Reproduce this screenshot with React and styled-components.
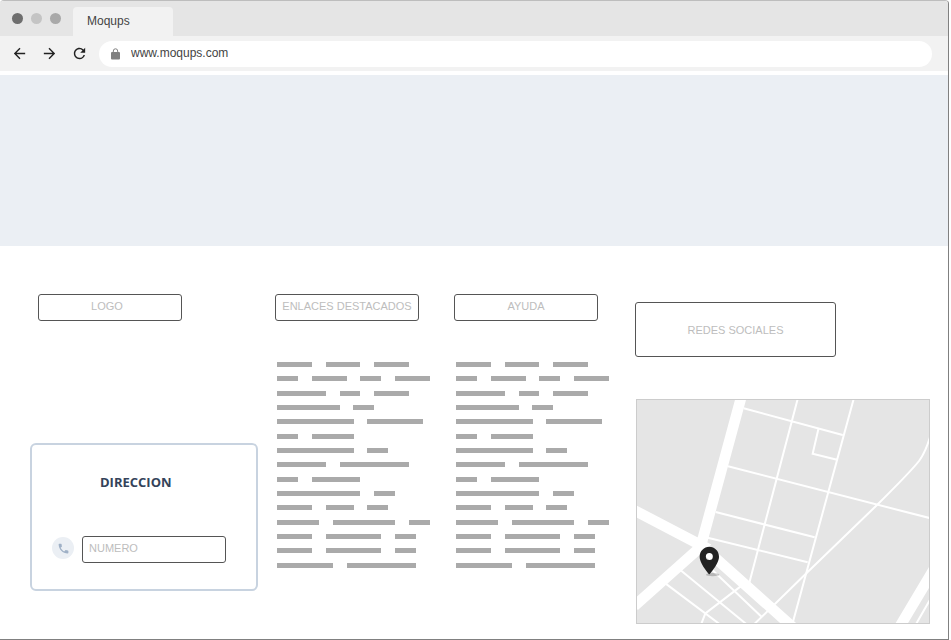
import React from "react";
import styled, { createGlobalStyle } from "styled-components";
import { MdArrowBack, MdArrowForward, MdRefresh, MdPhone } from "react-icons/md";

const GlobalStyle = createGlobalStyle`
  *, *::before, *::after { box-sizing: border-box; }
  body { margin: 0; background: #fff; font-family: "Liberation Sans", Arial, sans-serif; }
`;

const Window = styled.div`
  display: flex;
  flex-direction: column;
  min-height: 100vh;
  margin-right: 2px;
  background: #fff;
  border-top: 1px solid #bdbdbd;
  border-right: 1px solid #808080;
  border-bottom: 1px solid #808080;
  border-radius: 4px 4px 0 0;
  overflow: hidden;
`;

const TitleBar = styled.div`
  display: flex;
  align-items: flex-end;
  gap: 12px;
  height: 35px;
  padding-left: 12px;
  background: #e5e5e5;
`;

const Lights = styled.div`
  display: flex;
  gap: 8px;
  padding-bottom: 12px;
`;

const Light = styled.span`
  width: 11px;
  height: 11px;
  border-radius: 50%;
  background: ${(p) => p.$color};
`;

const Tab = styled.button`
  width: 100px;
  height: 29px;
  padding: 0 14px 2px;
  border: 0;
  border-radius: 4px 4px 0 0;
  background: #f2f2f2;
  color: #444;
  font: 12px/26px "Liberation Sans", Arial, sans-serif;
  text-align: left;
`;

const Toolbar = styled.div`
  display: flex;
  align-items: center;
  height: 35px;
  padding: 0 16px 0 11px;
  background: #f2f2f2;
`;

const NavButtons = styled.div`
  display: flex;
  gap: 13px;
  margin-right: 11px;
`;

const IconButton = styled.button`
  display: flex;
  padding: 0;
  border: 0;
  background: none;
  color: #222;
  font-size: 17px;
`;

const AddressBar = styled.label`
  display: flex;
  flex: 1;
  align-items: center;
  gap: 11px;
  height: 26px;
  padding: 0 12px;
  border-radius: 13px;
  background: #fff;
`;

const AddressInput = styled.input`
  flex: 1;
  padding: 0 0 2px;
  border: 0;
  outline: 0;
  background: none;
  color: #444;
  font: 12px/16px "Liberation Sans", Arial, sans-serif;
`;

const Banner = styled.section`
  height: 171px;
  margin-top: 4px;
  background: #ebeff4;
`;

const Footer = styled.footer`
  display: grid;
  grid-template-columns: 245fr 179fr 181fr 295fr;
  align-items: start;
  padding: 48px 18px 14px 30px;
`;

const Column = styled.section`
  display: flex;
  flex-direction: column;
  align-items: flex-start;
  gap: ${(p) => p.$gap}px;
  padding-top: ${(p) => p.$top || 0}px;
`;

const Field = styled.input`
  width: ${(p) => p.$width || 144}px;
  height: ${(p) => p.$height || 27}px;
  padding: 0 6px ${(p) => (p.$height ? 0 : 4)}px;
  border: 1px solid #555;
  border-radius: 3px;
  background: #fff;
  color: #444;
  font: 11px/16px "Liberation Sans", Arial, sans-serif;
  text-align: ${(p) => p.$align || "center"};

  &::placeholder { color: #bdbdbd; opacity: 1; }
`;

const LogoField = styled(Field)`
  padding-right: 12px;
`;

const LogoSlot = styled.div`
  padding-left: 8px;
`;

const Card = styled.section`
  display: flex;
  flex-direction: column;
  gap: 45px;
  width: 228px;
  height: 148px;
  padding: 28px 20px;
  border: 2px solid #c8d3e0;
  border-radius: 6px;
`;

const CardTitle = styled.h2`
  margin: 0;
  padding-left: 48px;
  color: #34435a;
  font: bold 13px/18px "Open Sans", sans-serif;
`;

const PhoneRow = styled.label`
  display: flex;
  align-items: center;
  gap: 8px;
`;

const PhoneBadge = styled.span`
  display: flex;
  align-items: center;
  justify-content: center;
  width: 22px;
  height: 22px;
  margin-bottom: 3px;
  border-radius: 50%;
  background: #ebeff4;
  color: #9fb0c6;
  font-size: 13px;
`;

const Lines = styled.div`
  display: flex;
  flex-direction: column;
  justify-content: space-between;
  width: 155px;
  height: 206px;
  padding-left: 2px;
`;

const Line = styled.div`
  display: grid;
  grid-template-columns: repeat(22, 1fr);
  height: 5px;
`;

const Word = styled.span`
  grid-column: ${(p) => p.$start} / span ${(p) => p.$size};
  background: #aaa;
`;

const MapFrame = styled.div`
  align-self: stretch;
  margin-left: 1px;
  border: 1px solid #ccc;
  background: #e5e5e5;

  svg { display: block; width: 100%; height: auto; }
`;

const PARAGRAPH = [
  [5, 5, 5],
  [3, 5, 3, 5],
  [7, 3, 5],
  [9, 3],
  [11, 8],
  [3, 6],
  [11, 3],
  [7, 10],
  [3, 7],
  [12, 3],
  [5, 4, 3],
  [6, 9, 3],
  [5, 8, 3],
  [5, 8, 3],
  [8, 10],
];

function TextLine({ words }) {
  let next = 1;
  return (
    <Line>
      {words.map((size, i) => {
        const start = next;
        next += size + 2;
        return <Word key={i} $start={start} $size={size} />;
      })}
    </Line>
  );
}

function LinkColumn({ title }) {
  return (
    <Column $gap={41}>
      <Field placeholder={title} aria-label={title} />
      <Lines aria-hidden="true">
        {PARAGRAPH.map((words, i) => (
          <TextLine key={i} words={words} />
        ))}
      </Lines>
    </Column>
  );
}

function LockIcon() {
  return (
    <svg width="9" height="12" viewBox="0 0 9 12" aria-hidden="true">
      <rect y="4" width="9" height="7.500" rx="1" fill="#808080" />
      <path d="M2.300 4.500V3a2.200 2.200 0 0 1 4.400 0v1.500" fill="none" stroke="#808080" />
    </svg>
  );
}

function StreetMap() {
  return (
    <MapFrame>
      <svg viewBox="0 0 876 669" role="img" aria-label="Mapa">
        <g fill="none" stroke="#fff" strokeWidth="6">
          <path d="M320 25L617 105M482-3L337 548M650-3L468 665M544 88L527 161L600 179M273 199L885 356M236 336L533 412M212 413L512 487" />
          <path d="M882 101Q867 155 846 183Q820 216 720 315L505 523L350 674M130 510L330 674M86 551L250 674M226 510L372 649M311 559L205 640L192 674M836 674L884 591" />
        </g>
        <g fill="none" stroke="#fff" strokeWidth="32">
          <path d="M312-6L191 440M-8 331L195 437L-8 618M187 431L470 684M782 690L890 509" />
        </g>
        <ellipse cx="227" cy="524" rx="20" ry="5" fill="#000" opacity=".2" />
        <path
          fill="#222"
          fillRule="evenodd"
          d="M217 440C201 440 188 453 188 470C188 492 217 523 217 523S246 492 246 470C246 453 233 440 217 440ZM217 459A10.500 10.500 0 1 1 217 480A10.500 10.500 0 1 1 217 459Z"
        />
      </svg>
    </MapFrame>
  );
}

export default function App() {
  return (
    <>
      <GlobalStyle />
      <Window>
        <TitleBar>
          <Lights>
            <Light $color="#6e6e6e" />
            <Light $color="#c4c4c4" />
            <Light $color="#a9a9a9" />
          </Lights>
          <Tab type="button">Moqups</Tab>
        </TitleBar>
        <Toolbar>
          <NavButtons>
            <IconButton type="button" aria-label="Back"><MdArrowBack /></IconButton>
            <IconButton type="button" aria-label="Forward"><MdArrowForward /></IconButton>
            <IconButton type="button" aria-label="Reload"><MdRefresh /></IconButton>
          </NavButtons>
          <AddressBar>
            <LockIcon />
            <AddressInput defaultValue="www.moqups.com" aria-label="Address" />
          </AddressBar>
        </Toolbar>
        <Banner />
        <Footer>
          <Column $gap={122}>
            <LogoSlot>
              <LogoField placeholder="LOGO" aria-label="LOGO" />
            </LogoSlot>
            <Card>
              <CardTitle>DIRECCION</CardTitle>
              <PhoneRow>
                <PhoneBadge><MdPhone /></PhoneBadge>
                <Field placeholder="NUMERO" aria-label="NUMERO" $align="left" />
              </PhoneRow>
            </Card>
          </Column>
          <LinkColumn title="ENLACES DESTACADOS" />
          <LinkColumn title="AYUDA" />
          <Column $gap={42} $top={8}>
            <Field placeholder="REDES SOCIALES" aria-label="REDES SOCIALES" $width={201} $height={55} />
            <StreetMap />
          </Column>
        </Footer>
      </Window>
    </>
  );
}
